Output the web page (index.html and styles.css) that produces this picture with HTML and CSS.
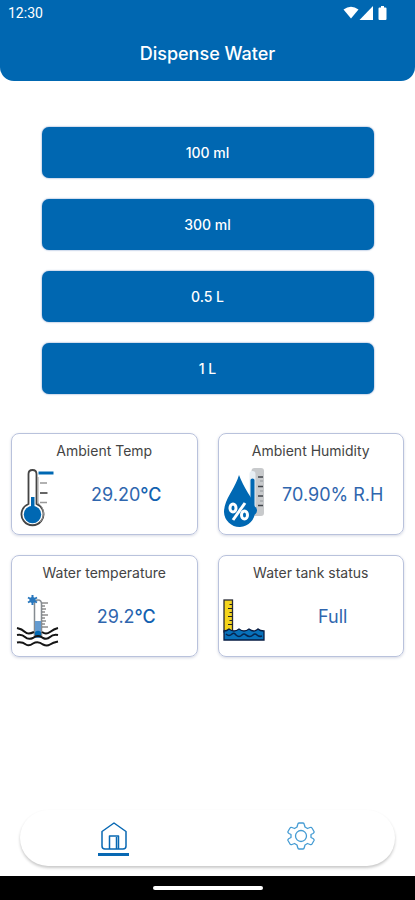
FILE: index.html
```html
<!DOCTYPE html>
<html lang="en">
<head>
<meta charset="utf-8">
<meta name="viewport" content="width=device-width, initial-scale=1">
<title>Dispense Water</title>
<link rel="stylesheet" href="styles.css">
</head>
<body>
<div class="app">
  <header class="header">
    <div class="status">
      <span class="clock">12:30</span>
      <svg class="status-icons" width="46" height="16" viewBox="0 0 46 16" fill="#fff" aria-hidden="true">
        <path d="M.5 4.500Q8 -1 15.500 4.500L8 13.500Z"/>
        <path d="M30 1V15H16.500Z"/>
        <path d="M38 1h3v1.500h1.500q1 0 1 1V14q0 1-1 1h-6q-1 0-1-1V3.500q0-1 1-1H38Z"/>
      </svg>
    </div>
    <h1 class="title">Dispense Water</h1>
  </header>

  <main class="main">
    <div class="amounts">
      <button class="amount" type="button">100 ml</button>
      <button class="amount" type="button">300 ml</button>
      <button class="amount" type="button">0.5 L</button>
      <button class="amount" type="button">1 L</button>
    </div>

    <div class="cards">
      <section class="card">
        <h2 class="card-title">Ambient Temp</h2>
        <div class="card-body">
          <svg class="card-icon" viewBox="0 0 44 64" aria-hidden="true">
            <path d="M12.500 38V8q0-4 4-4t4 4v30a11 11 0 1 1-8 0Z" fill="#fff" stroke="#444" stroke-width="1.800"/>
            <path d="M22 11V37a12.500 12.500 0 0 1 2 19" fill="none" stroke="#999" stroke-width="1"/>
            <circle cx="16.500" cy="48.500" r="8.700" fill="#0068b3"/>
            <path d="M15 31h3.500v12H15Z" fill="#0068b3"/>
            <path d="M22.500 7h15" stroke="#0068b3" stroke-width="3"/>
            <path d="M24 17h7M24 36.500h7" stroke="#999" stroke-width="1.500"/>
            <path d="M24 27h7.500" stroke="#333" stroke-width="1.500"/>
          </svg>
          <p class="value">29.20<span class="unit">℃</span></p>
        </div>
      </section>

      <section class="card">
        <h2 class="card-title">Ambient Humidity</h2>
        <div class="card-body">
          <svg class="card-icon" viewBox="0 0 44 64" aria-hidden="true">
            <rect x="28.500" y="2" width="12.500" height="48" rx="3" fill="#c8cacc"/>
            <path d="M26.500 43V8q0-3 3-3t3 3v35Z" fill="#e8eef3"/>
            <path d="M27.500 14q0-1.500 2-1.500t2 1.500v29h-4Z" fill="#0068b3"/>
            <path d="M35 11h5M35 20.500h5M35 30h5M35 39.500h5" stroke="#41464b" stroke-width="1.500"/>
            <path d="M37 15h3M37 25h3M37 35h3" stroke="#92979b"/>
            <path d="M16 9Q19 17 25 27q7 10 7 18a15.500 15.500 0 0 1-31 1q0-8 6-18 7-12 9-19Z" fill="#0068b3"/>
            <circle cx="29.500" cy="44.500" r="4.500" fill="#0068b3"/>
            <g fill="none" stroke="#fff" stroke-width="3"><ellipse cx="10" cy="42" rx="3" ry="4"/><ellipse cx="21.500" cy="49" rx="3" ry="4"/><path d="m22 37-12 17"/></g>
          </svg>
          <p class="value">70.90% R.H</p>
        </div>
      </section>

      <section class="card">
        <h2 class="card-title">Water temperature</h2>
        <div class="card-body">
          <svg class="card-icon" viewBox="0 0 44 64" aria-hidden="true">
            <path d="M18.500 50V16q0-4 3.500-4t3.500 4v34" fill="#fff" stroke="#858b91" stroke-width="1.500"/>
            <path d="M19 33h6v17h-6Z" fill="#649bd0"/>
            <circle cx="22" cy="46" r="3.200" fill="#0068b3"/>
            <path d="M26 15h6M26 18h3M26 21h4M26 24h3M26 27h6M26 30h3M26 33h4M26 36h3M26 39h6" stroke="#555" stroke-width="1"/>
            <g stroke="#2877bd" stroke-width="2"><path d="M16.500 7v10M12 9.500l9 5M12 14.500l9-5"/></g>
            <circle cx="16.500" cy="12" r="3" fill="#2877bd"/>
            <g fill="none" stroke="#151515" stroke-width="2"><path d="M1 40q5 1 8 4t9 0M26 44q4 3 8 0t8-4M1 47q5-1 8 2t8 1q5-4 10 0 4 2 7-1t8-2M1 54.500q5-1 9 2 3 2 7-1 5-3 10 1 4 2 7 0t8-3"/></g>
          </svg>
          <p class="value">29.2<span class="unit">℃</span></p>
        </div>
      </section>

      <section class="card">
        <h2 class="card-title">Water tank status</h2>
        <div class="card-body">
          <svg class="card-icon" viewBox="0 0 44 64" aria-hidden="true">
            <rect x="1" y="12" width="8.500" height="32" fill="#f5d51c" stroke="#292b35" stroke-width="1.300"/>
            <path d="M6.500 16.500h3M5 20.500h4.500M6.500 24.500h3M5 28.500h4.500M6.500 32.500h3M5 36.500h4.500" stroke="#222"/>
            <path d="M1 43q3 0 5-2 5 4 10 0 5 4 10 0 5 4 9 0 2 2 6 2v9H1Z" fill="#0871ba" stroke="#071c43" stroke-width="1.300"/>
            <path d="M3 46q3 3 6 0 2-2 4 1 3 3 6 0 2-2 4 0 4 3 7 0 2-2 4 0 2 2 5 1" fill="none" stroke="#06254f" stroke-width="1.600"/>
          </svg>
          <p class="value">Full</p>
        </div>
      </section>
    </div>
  </main>

  <nav class="nav" aria-label="Main">
    <a class="nav-link active" href="#home" aria-label="Home">
      <svg width="28" height="28" viewBox="0 0 28 28" fill="none" stroke="#0868b3" stroke-width="1.500" stroke-linejoin="round" aria-hidden="true"><path d="M2 9.500 14 1l12 8.500V24q0 3-3 3H5q-3 0-3-3ZM9.500 27V14h9v13M16.500 15v12"/></svg>
    </a>
    <a class="nav-link" href="#settings" aria-label="Settings">
      <svg width="28" height="28" viewBox="0 0 28 28" fill="none" stroke="#449bd3" stroke-width="1.300" stroke-linejoin="round" aria-hidden="true"><circle cx="14" cy="14" r="5.500"/><path d="M12 1h4q1 0 1.300 1.500L18 5l2.500 1.500 2.500-1q1.500-.5 2 .5l2 3.500q.5 1-1 2l-2 1v3l2 1q1.500 1 1 2l-2 3.500q-.5 1-2 .5l-2.500-1L18 23l-.7 2.500Q17 27 16 27h-4q-1 0-1.300-1.500L10 23l-2.500-1.500-2.500 1q-1.500.5-2-.5l-2-3.500q-.5-1 1-2l2-1v-3l-2-1q-1.500-1-1-2L3 6q.5-1 2-.5l2.500 1L10 5l.7-2.500Q11 1 12 1Z"/></svg>
    </a>
  </nav>
  <footer class="system-bar"><span class="handle"></span></footer>
</div>
</body>
</html>
```
FILE: styles.css
```css
* { box-sizing: border-box; }

body {
  margin: 0;
  background: #fff;
  font-family: Inter, "Noto Sans CJK JP", sans-serif;
}

h1, h2, p { margin: 0; font-weight: 400; }

.app {
  min-height: 100vh;
  display: flex;
  flex-direction: column;
}

.header {
  background: #0067b1;
  color: #fff;
  border-radius: 0 0 14px 14px;
  padding-bottom: 15px;
}

.status {
  display: flex;
  align-items: center;
  justify-content: space-between;
  padding: 5px 26px 0 8px;
}

.clock {
  font: 400 14px/16px Roboto, sans-serif;
}

.title {
  margin-top: 21px;
  font-size: 18px;
  line-height: 24px;
  font-weight: 500;
  text-align: center;
}

.main { flex: 1; }

.amounts {
  display: flex;
  flex-direction: column;
  gap: 21px;
  width: 80%;
  margin: 46px auto 0;
}

.amount {
  height: 51px;
  border: 0;
  border-radius: 7px;
  background: #0067b1;
  box-shadow: 0 0 2px #5d83bd;
  color: #fff;
  font: 500 14px/20px Inter, sans-serif;
}

.cards {
  display: grid;
  grid-template-columns: 1fr 1fr;
  gap: 20px;
  padding: 39px 11px 20px;
}

.card {
  border: 1px solid #b9c2dc;
  border-radius: 8px;
  box-shadow: 0 1px 3px #d5d8e3;
  padding: 7px 4px 0;
}

.card-title {
  color: #444;
  font-size: 14px;
  line-height: 20px;
  text-align: center;
}

.card-body {
  display: flex;
  align-items: center;
}

.card-icon {
  width: 44px;
  height: 64px;
  margin: 5px 0 4px;
}

.value {
  flex: 1;
  padding-bottom: 6px;
  color: #2f66ae;
  font-size: 18px;
  line-height: 24px;
  text-align: center;
}

.unit { color: #1261b0; font-weight: 500; }

.nav {
  display: flex;
  height: 56px;
  margin: 0 20px 10px;
  border-radius: 28px;
  background: #fff;
  box-shadow: 0 2px 3px #c9c9c9;
}

.nav-link {
  flex: 1;
  display: flex;
  flex-direction: column;
  align-items: center;
  padding-top: 12px;
}

.active::after {
  content: "";
  width: 31px;
  height: 3px;
  margin-top: 3px;
  background: #0868b3;
}

.system-bar {
  height: 24px;
  display: flex;
  align-items: center;
  justify-content: center;
  background: #000;
}

.handle {
  width: 110px;
  height: 4px;
  border-radius: 2px;
  background: #fff;
}
```
